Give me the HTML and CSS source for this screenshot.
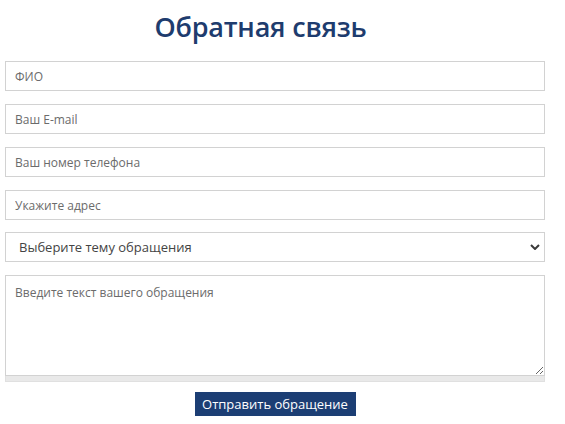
FILE: index.html
```html
<!DOCTYPE html>
<html lang="ru">
<head>
<meta charset="utf-8">
<title>Обратная связь</title>
<link rel="stylesheet" href="styles.css">
</head>
<body>
<div class="page">
  <h1 class="title">Обратная связь</h1>
  <form class="form">
    <input class="field" type="text" placeholder="ФИО">
    <input class="field" type="text" placeholder="Ваш E-mail">
    <input class="field" type="text" placeholder="Ваш номер телефона">
    <input class="field" type="text" placeholder="Укажите адрес">
    <div class="select-wrap">
      <select class="field select">
        <option>Выберите тему обращения</option>
      </select>
      <svg class="chev" width="10" height="6" viewBox="0 0 10 6"><path d="M1 1 L5 5 L9 1" fill="none" stroke="#3a3a3a" stroke-width="2"/></svg>
    </div>
    <div class="area-wrap">
      <textarea class="area" placeholder="Введите текст вашего обращения"></textarea>
      <div class="area-bar"></div>
    </div>
    <div class="actions">
      <button class="btn" type="button">Отправить обращение</button>
    </div>
  </form>
</div>
</body>
</html>
```

FILE: styles.css
```css
* { box-sizing: border-box; }
html, body { margin: 0; padding: 0; background: #fff; }
body { font-family: "Open Sans", "Noto Sans", sans-serif; }
.page { padding: 0 21px 0 5px; }
.title {
  margin: 0;
  padding: 8px 28px 0 0;
  height: 61px;
  text-align: center;
  font-size: 27px;
  line-height: 38px;
  font-weight: 600;
  color: #1e3c6e;
  letter-spacing: -0.2px;
}
.form { display: flex; flex-direction: column; gap: 13px; width: 540px; }
.field {
  display: block;
  width: 100%;
  height: 30px;
  border: 1px solid #d2d2d2;
  border-radius: 0;
  padding: 0 9px;
  font-family: "Open Sans", "Noto Sans", sans-serif;
  font-size: 12px;
  color: #555;
  background: #fff;
  outline: none;
}
.field::placeholder { color: #6b6b6b; }
.select-wrap { position: relative; height: 30px; margin-top: -1px; }
.select {
  appearance: none;
  -webkit-appearance: none;
  padding-left: 13px;
  font-size: 13px;
  color: #444;
}
.chev { position: absolute; right: 5px; top: 12px; pointer-events: none; }
.area-wrap { display: flex; flex-direction: column; }
.area {
  display: block;
  width: 100%;
  height: 101px;
  border: 1px solid #d2d2d2;
  padding: 8px 9px;
  font-family: "Open Sans", "Noto Sans", sans-serif;
  font-size: 12px;
  color: #555;
  resize: vertical;
  outline: none;
  margin: 0;
}
.area::placeholder { color: #6b6b6b; }
.area-bar { height: 6px; background: #e9e9e9; border: 1px solid #e0e0e0; border-top: 0; }
.actions { display: flex; justify-content: center; margin-top: -3px; }
.btn {
  width: 161px;
  height: 24px;
  border: 0;
  border-radius: 0;
  padding: 0;
  background: #1c3e74;
  color: #fff;
  font-family: "Open Sans", "Noto Sans", sans-serif;
  font-size: 13px;
  line-height: 24px;
}
```
